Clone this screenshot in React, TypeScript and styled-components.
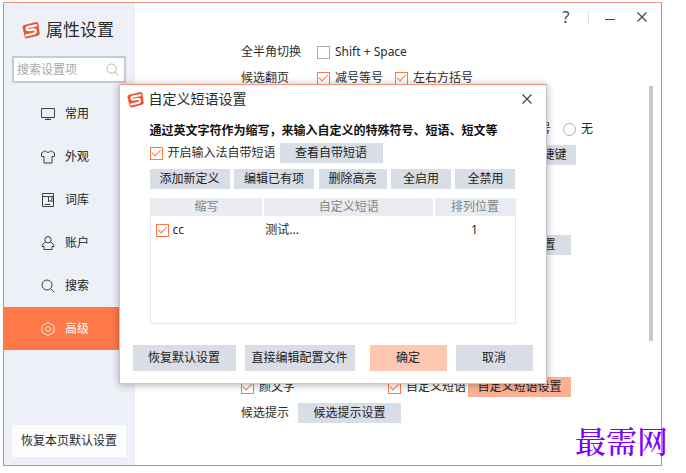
import React from "react";
import styled, { createGlobalStyle, css } from "styled-components";

const GlobalStyle = createGlobalStyle`
  *, *::before, *::after { box-sizing: border-box; }
  body {
    margin: 0;
    background: #fff;
    color: #2b2b2b;
    font: 12px/16px "Noto Sans", "Noto Sans CJK SC", sans-serif;
  }
  button, input { font: inherit; color: inherit; }
`;

const accent = "#ff7847";

const Page = styled.div`
  position: relative;
  min-height: 100vh;
  padding: 2px 24px 7px 3px;
  display: flex;
`;

const Window = styled.div`
  position: relative;
  flex: 1;
  min-width: 0;
  display: flex;
  border: 1px solid;
  border-color: #f89580 #929cab #929cab;
  background: #fff;
`;

const Sidebar = styled.aside`
  flex: 0 0 131px;
  min-width: 0;
  display: flex;
  flex-direction: column;
  padding-bottom: 8px;
  background: #edf1f7;
`;

const Brand = styled.h1`
  display: flex;
  align-items: center;
  gap: 6px;
  margin: 0;
  padding: 15px 0 0 18px;
  font-size: 17px;
  font-weight: 400;
  line-height: 24px;
  white-space: nowrap;
`;

const SearchBox = styled.label`
  display: flex;
  align-items: center;
  height: 27px;
  margin: 14px 9px 9px 8px;
  padding: 0 5px 0 3px;
  border: 2px solid #c5cad3;
  background: #fff;
  color: #b0b0b0;
`;

const SearchInput = styled.input`
  flex: 1;
  width: 0;
  min-width: 0;
  padding: 0;
  border: 0;
  outline: 0;
  background: none;
  &::placeholder { color: #aaa7a7; opacity: 1; }
`;

const Nav = styled.nav`
  display: flex;
  flex-direction: column;
`;

const NavItem = styled.a<{ $active?: boolean }>`
  display: flex;
  align-items: center;
  gap: 10px;
  height: 43px;
  padding-left: 37px;
  color: ${(p) => (p.$active ? "#fff" : "#222")};
  background: ${(p) => (p.$active ? accent : "transparent")};
  text-decoration: none;
  svg { opacity: 0.85; }
`;

const PageReset = styled.button`
  height: 32px;
  margin: auto 9px 0 8px;
  padding: 0;
  border: 0;
  background: #fdfdfe;
  white-space: nowrap;
`;

const Main = styled.main`
  flex: 1;
  min-width: 0;
  display: flex;
  flex-direction: column;
`;

const TitleBar = styled.header`
  display: flex;
  justify-content: flex-end;
  align-items: center;
  height: 28px;
  padding-right: 8px;
`;

const WindowButton = styled.button`
  display: grid;
  place-items: center;
  width: 22px;
  height: 22px;
  padding: 0;
  border: 0;
  background: none;
  color: #444;
  font-size: 16px;
`;

const WindowButtons = styled.div`
  display: flex;
  align-items: center;
  gap: 10px;
`;

const Divider = styled.span`
  width: 1px;
  height: 13px;
  background: #e3e3e3;
`;

const HelpGroup = styled.div`
  display: flex;
  align-items: center;
  gap: 11px;
`;

const Body = styled.div`
  flex: 1;
  display: flex;
  padding: 8px 8px 0 106px;
`;

const Settings = styled.div`
  flex: 1;
  min-width: 0;
`;

const Row = styled.div<{ $gap?: number; $tail?: number }>`
  display: flex;
  align-items: center;
  height: 26px;
  margin-top: ${(p) => p.$gap ?? 0}px;
  white-space: nowrap;
  ${(p) =>
    p.$tail !== undefined &&
    css`
      justify-content: flex-end;
      padding-right: ${p.$tail}px;
    `}
`;

const RowLabel = styled.span<{ $wide?: boolean }>`
  flex: 0 0 ${(p) => (p.$wide ? 76 : 57)}px;
`;

const Option = styled.label<{ $width?: number }>`
  display: flex;
  align-items: center;
  gap: 5px;
  margin-right: 12px;
  white-space: nowrap;
  ${(p) => p.$width && css`width: ${p.$width}px; margin-right: 0;`}
`;

const CheckBox = styled.input.attrs({ type: "checkbox" })`
  appearance: none;
  flex: none;
  display: grid;
  place-items: center;
  width: 13px;
  height: 13px;
  margin: 0;
  border: 1px solid #a9adb5;
  background: #fff;
  &:checked { border-color: ${accent}; }
  &:checked::after {
    content: "";
    width: 9px;
    height: 5px;
    margin-bottom: 3px;
    border: solid ${accent};
    border-width: 0 0 1px 1px;
    transform: rotate(-45deg);
  }
`;

const Radio = styled.input.attrs({ type: "radio" })`
  appearance: none;
  width: 13px;
  height: 13px;
  margin: 0;
  border: 1px solid #a9adb5;
  border-radius: 50%;
  background: #fff;
`;

const buttonSizes = {
  regular: { height: 20, min: 103, pad: 0 },
  tool: { height: 20, min: 60, pad: 10 },
  medium: { height: 26, min: 77, pad: 7 },
  large: { height: 26, min: 103, pad: 7 },
};

const Button = styled.button<{ $tone?: "primary" | "highlight"; $size?: keyof typeof buttonSizes }>`
  height: ${(p) => buttonSizes[p.$size ?? "regular"].height}px;
  min-width: ${(p) => buttonSizes[p.$size ?? "regular"].min}px;
  padding: 0 ${(p) => buttonSizes[p.$size ?? "regular"].pad}px;
  border: 0;
  background: ${(p) => (p.$tone === "primary" ? "#ffc7b1" : p.$tone === "highlight" ? "#ffb196" : "#d9dde5")};
  color: #222;
  white-space: nowrap;
`;

const ScrollTrack = styled.div`
  flex: 0 0 4px;
  padding-top: 47px;
`;

const ScrollThumb = styled.div`
  height: 255px;
  background: #c6c9cf;
`;

const Overlay = styled.div`
  position: absolute;
  inset: 0;
  display: grid;
  place-items: center;
`;

const Dialog = styled.section`
  width: 65%;
  min-width: 428px;
  padding: 4px 13px 12px;
  border: 1px solid;
  border-color: #f89580 #c3c6cb #c3c6cb;
  background: #fff;
  box-shadow: 0 1px 8px rgba(0, 0, 0, 0.3);
`;

const DialogHeader = styled.header`
  display: flex;
  align-items: center;
  justify-content: space-between;
  height: 22px;
  margin: -1px -5px 0 -6px;
`;

const DialogTitle = styled.h2`
  display: flex;
  align-items: center;
  gap: 5px;
  margin: 0;
  font-size: 14px;
  font-weight: 400;
  line-height: 20px;
`;

const DialogContent = styled.div`
  padding: 13px 17px 0;
`;

const Hint = styled.p`
  margin: 0 0 4px;
  color: #111;
  font-weight: 700;
  white-space: nowrap;
`;

const OptionLine = styled.div`
  display: flex;
  align-items: center;
  gap: 4px;
  ${Option} { margin: 0; }
`;

const Tools = styled.div`
  display: flex;
  justify-content: space-between;
  margin: 6px 0 9px;
`;

const TableFrame = styled.div`
  height: 126px;
  border: 1px solid #e6e8ec;
  border-top: 0;
`;

const PhraseTable = styled.table`
  width: 100%;
  table-layout: fixed;
  border-collapse: collapse;
  th, td { padding: 0; font-weight: 400; }
  th {
    height: 18px;
    border-right: 2px solid #fff;
    background: #e9ecf1;
    color: #858585;
  }
  th:first-child { width: 31%; }
  th:last-child { width: 22%; border-right: 0; }
  td { height: 28px; padding-left: 2px; }
  td:first-child { padding-left: 5px; }
  td:last-child { padding: 0; text-align: center; }
  label { gap: 4px; }
`;

const Footer = styled.footer`
  display: flex;
  justify-content: space-between;
  margin-top: 21px;
`;

const FooterGroup = styled.div`
  display: flex;
  gap: 9px;
`;

const Watermark = styled.div`
  position: absolute;
  right: 18px;
  bottom: 12px;
  color: #8000ff;
  font: 500 31px/36px "Liberation Serif", "Noto Serif CJK SC", "Noto Sans CJK SC", serif;
`;

const Logo = ({ size }: { size: number }) => (
  <svg width={size} height={size} viewBox="0 0 20 20" aria-hidden="true">
    <path d="M2.500 4.500 15.500 1.200Q17.800.8 18.200 3L19.700 13.500Q19.900 15.700 17.700 16.300L6 19.300Q3.500 19.800 2.900 17.300L.6 7Q.3 5 2.500 4.500Z" fill="#ee5639" />
    <path d="M16.500 4.600 7.500 6.500Q4.800 7.200 5.200 9 5.700 10.500 8 10.100L12.300 9.300Q15.200 9 15.300 11.300 15.200 13.600 12.300 14.200L3.800 16.200" fill="none" stroke="#fff" strokeWidth="2.400" />
  </svg>
);

const Cross = () => (
  <svg width="10" height="10" viewBox="0 0 10 10" fill="none" stroke="currentColor" aria-hidden="true">
    <path d="m.5.5 9 9M9.500.5l-9 9" strokeWidth="1.2" />
  </svg>
);

const glyphs: Record<string, React.ReactNode> = {
  display: <path d="M.5 1.500h13v9H.5zM7 10.500v2M4 12.500h6" />,
  shirt: <path d="M4.500.8.500 2.800v3.700H3v6.500h8V6.500h2.500V2.800L9.500.8Q7 4 4.500.8Z" />,
  book: <path d="M1.500.5h11v13h-11zM1.500 3.500h11M7.500 3.500v5.500l1.800-1.800L11 9V3.500M3.500 11.500h6" />,
  user: (
    <>
      <circle cx="7" cy="3.700" r="3.200" />
      <path d="M4.700 6.200C2.300 7 1 8.700 1 10.500h2v3h8v-3h2C13 8.700 11.700 7 9.300 6.200" />
    </>
  ),
  search: (
    <>
      <circle cx="6" cy="6" r="5" />
      <path d="m9.700 9.700 3.800 3.800" />
    </>
  ),
  gear: (
    <>
      <path d="m7 .5 6 3.200v6.600l-6 3.200-6-3.200V3.700Z" />
      <circle cx="7" cy="7" r="2.500" />
    </>
  ),
};

const Glyph = ({ name, size = 14 }: { name: string; size?: number }) => (
  <svg width={size} height={size} viewBox="0 0 14 14" fill="none" stroke="currentColor" aria-hidden="true">
    {glyphs[name]}
  </svg>
);

const Check = ({ label, checked = true, width }: { label: string; checked?: boolean; width?: number }) => (
  <Option $width={width}>
    <CheckBox defaultChecked={checked} />
    {label}
  </Option>
);

const navItems = [
  ["display", "常用"],
  ["shirt", "外观"],
  ["book", "词库"],
  ["user", "账户"],
  ["search", "搜索"],
  ["gear", "高级"],
];

export default function App() {
  return (
    <Page>
      <GlobalStyle />
      <Window>
        <Sidebar>
          <Brand>
            <Logo size={18} />
            属性设置
          </Brand>
          <SearchBox>
            <SearchInput type="text" placeholder="搜索设置项" aria-label="搜索设置项" />
            <Glyph name="search" size={13} />
          </SearchBox>
          <Nav>
            {navItems.map(([icon, label]) => (
              <NavItem key={icon} href={`#${icon}`} $active={icon === "gear"}>
                <Glyph name={icon} />
                {label}
              </NavItem>
            ))}
          </Nav>
          <PageReset type="button">恢复本页默认设置</PageReset>
        </Sidebar>
        <Main>
          <TitleBar>
            <WindowButtons>
              <HelpGroup>
                <WindowButton type="button" aria-label="帮助">?</WindowButton>
                <Divider />
              </HelpGroup>
              <WindowButton type="button" aria-label="最小化">
                <svg width="10" height="10" stroke="currentColor" aria-hidden="true">
                  <path d="M0 7.500h10" />
                </svg>
              </WindowButton>
              <WindowButton type="button" aria-label="关闭">
                <Cross />
              </WindowButton>
            </WindowButtons>
          </TitleBar>
          <Body>
            <Settings>
              <Row>
                <RowLabel $wide>全半角切换</RowLabel>
                <Check label="Shift + Space" checked={false} />
              </Row>
              <Row>
                <RowLabel $wide>候选翻页</RowLabel>
                <Check label="减号等号" />
                <Check label="左右方括号" />
              </Row>
              <Row $gap={25} $tail={44}>
                <Option>
                  <Radio name="pick" />
                  逗号句号
                </Option>
                <Option>
                  <Radio name="pick" />无
                </Option>
              </Row>
              <Row $tail={73}>
                <Button type="button">系统功能快捷键</Button>
              </Row>
              <Row $gap={64} $tail={78}>
                <Button type="button">特殊符号设置</Button>
              </Row>
              <Row $gap={116}>
                <Check label="颜文字" width={147} />
                <Check label="自定义短语" width={80} />
                <Button type="button" $tone="highlight">自定义短语设置</Button>
              </Row>
              <Row>
                <RowLabel>候选提示</RowLabel>
                <Button type="button">候选提示设置</Button>
              </Row>
            </Settings>
            <ScrollTrack>
              <ScrollThumb />
            </ScrollTrack>
          </Body>
        </Main>
        <Overlay>
          <Dialog role="dialog" aria-labelledby="phrase-title">
            <DialogHeader>
              <DialogTitle id="phrase-title">
                <Logo size={17} />
                自定义短语设置
              </DialogTitle>
              <WindowButton type="button" aria-label="关闭">
                <Cross />
              </WindowButton>
            </DialogHeader>
            <DialogContent>
              <Hint>通过英文字符作为缩写，来输入自定义的特殊符号、短语、短文等</Hint>
              <OptionLine>
                <Check label="开启输入法自带短语" />
                <Button type="button">查看自带短语</Button>
              </OptionLine>
              <Tools>
                <Button type="button" $size="tool">添加新定义</Button>
                <Button type="button" $size="tool">编辑已有项</Button>
                <Button type="button" $size="tool">删除高亮</Button>
                <Button type="button" $size="tool">全启用</Button>
                <Button type="button" $size="tool">全禁用</Button>
              </Tools>
              <TableFrame>
                <PhraseTable>
                  <thead>
                    <tr>
                      <th>缩写</th>
                      <th>自定义短语</th>
                      <th>排列位置</th>
                    </tr>
                  </thead>
                  <tbody>
                    <tr>
                      <td><Check label="cc" /></td>
                      <td>测试...</td>
                      <td>1</td>
                    </tr>
                  </tbody>
                </PhraseTable>
              </TableFrame>
            </DialogContent>
            <Footer>
              <FooterGroup>
                <Button type="button" $size="large">恢复默认设置</Button>
                <Button type="button" $size="large">直接编辑配置文件</Button>
              </FooterGroup>
              <FooterGroup>
                <Button type="button" $size="medium" $tone="primary">确定</Button>
                <Button type="button" $size="medium">取消</Button>
              </FooterGroup>
            </Footer>
          </Dialog>
        </Overlay>
      </Window>
      <Watermark>最需网</Watermark>
    </Page>
  );
}
